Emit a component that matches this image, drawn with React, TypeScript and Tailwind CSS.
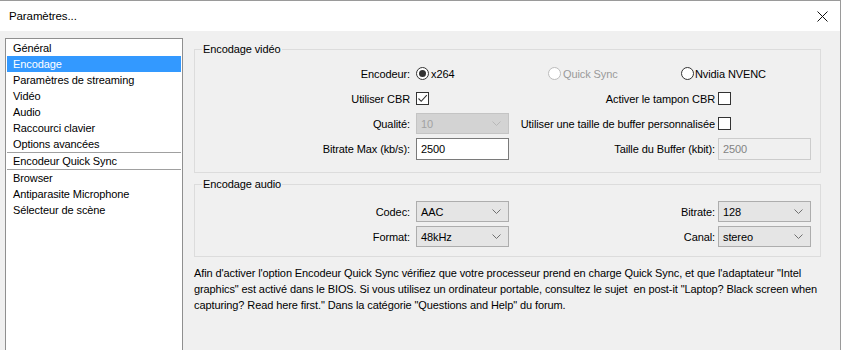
import React from "react";

const font = { fontFamily: '"Liberation Sans", Arial, sans-serif' };

const Chevron = ({ disabled }: { disabled?: boolean }) => (
  <svg width="9" height="5" viewBox="0 0 9 5" className="shrink-0">
    <path d="M0.5 0.5 L4.5 4.5 L8.5 0.5" fill="none" stroke={disabled ? "#b8b8b8" : "#707070"} strokeWidth="1" />
  </svg>
);

const Combo = ({ value, disabled }: { value: string; disabled?: boolean }) => (
  <div
    className={
      "flex h-[21px] w-[93px] items-center justify-between border pl-[4px] pr-[7px] " +
      (disabled ? "border-[#c4c4c4] bg-[#d3d3d3] text-[#a2a2a2]" : "border-[#adadad] bg-[#e5e5e5] text-black")
    }
  >
    <span>{value}</span>
    <Chevron disabled={disabled} />
  </div>
);

const TextBox = ({ value, disabled }: { value: string; disabled?: boolean }) => (
  <div
    className={
      "flex h-[22px] w-[93px] items-center border pl-[4px] " +
      (disabled ? "border-[#cccccc] bg-[#f0f0f0] text-[#838383]" : "border-[#7a7a7a] bg-white text-black")
    }
  >
    {value}
  </div>
);

const Check = ({ checked }: { checked?: boolean }) => (
  <div className="flex h-[13px] w-[13px] items-center justify-center border border-[#333333] bg-white">
    {checked && (
      <svg width="11" height="11" viewBox="0 0 11 11">
        <path d="M1.5 5.5 L4.2 8.3 L9.8 2.2" fill="none" stroke="#333333" strokeWidth="1.1" />
      </svg>
    )}
  </div>
);

const Radio = ({ checked, disabled }: { checked?: boolean; disabled?: boolean }) => (
  <div
    className={
      "flex h-[13px] w-[13px] items-center justify-center rounded-full border bg-white " +
      (disabled ? "border-[#bcbcbc]" : "border-[#333333]")
    }
  >
    {checked && <div className="h-[7px] w-[7px] rounded-full bg-[#333333]" />}
  </div>
);

const Row = ({
  label,
  left,
  rightLabel,
  right,
}: {
  label: string;
  left: React.ReactNode;
  rightLabel?: string;
  right?: React.ReactNode;
}) => (
  <div className="grid h-[25px] grid-cols-[221px_93px_209px_93px] items-center whitespace-nowrap">
    <div className="pr-[6px] text-right">{label}</div>
    <div>{left}</div>
    <div className="pr-[3px] text-right">{rightLabel}</div>
    <div>{right}</div>
  </div>
);

const menu = [
  "Général",
  "Encodage",
  "Paramètres de streaming",
  "Vidéo",
  "Audio",
  "Raccourci clavier",
  "Options avancées",
  "-",
  "Encodeur Quick Sync",
  "-",
  "Browser",
  "Antiparasite Microphone",
  "Sélecteur de scène",
];

export default function App() {
  return (
    <div style={font} className="h-[350px] w-[841px] overflow-hidden border-r border-t border-[#9a9a9a] bg-[#f0f0f0] text-[11px] leading-[16px] tracking-[-0.1px] text-black">
      <div className="flex h-[30px] items-center justify-between bg-white pl-[9px] pr-[12px] text-[11.5px]">
        <span>Paramètres...</span>
        <svg width="11" height="11" viewBox="0 0 11 11">
          <path d="M0.5 0.5 L10.5 10.5 M10.5 0.5 L0.5 10.5" stroke="#111111" strokeWidth="1" />
        </svg>
      </div>

      <div className="flex">
        <div className="ml-[5px] mt-[7px] h-[330px] w-[178px] border border-[#8f8f8f] bg-white px-[1px] pt-[1px]">
          {menu.map((m, i) =>
            m === "-" ? (
              <div key={i} className="h-px bg-[#a0a0a0]" />
            ) : (
              <div
                key={i}
                className={"h-[16px] pl-[6px] " + (m === "Encodage" ? "bg-[#3399ff] text-white" : "")}
              >
                {m}
              </div>
            )
          )}
        </div>

        <div className="ml-[11px] w-[627px] pt-[10px]">
          <fieldset className="border border-[#dcdcdc] pb-[11px]">
            <legend className="ml-[7px] px-[1px]">Encodage vidéo</legend>
            <div className="pt-[4px] whitespace-nowrap">
              <div className="flex h-[25px] items-center">
                <div className="w-[221px] pr-[6px] text-right">Encodeur:</div>
                <div className="flex w-[132px] items-center gap-[2px]">
                  <Radio checked />
                  <span>x264</span>
                </div>
                <div className="flex w-[133px] items-center gap-[2px] text-[#9a9a9a]">
                  <Radio disabled />
                  <span>Quick Sync</span>
                </div>
                <div className="flex items-center gap-[1px]">
                  <Radio />
                  <span>Nvidia NVENC</span>
                </div>
              </div>
              <Row label="Utiliser CBR" left={<Check checked />} rightLabel="Activer le tampon CBR" right={<Check />} />
              <Row
                label="Qualité:"
                left={<Combo value="10" disabled />}
                rightLabel="Utiliser une taille de buffer personnalisée"
                right={<Check />}
              />
              <Row
                label="Bitrate Max (kb/s):"
                left={<TextBox value="2500" />}
                rightLabel="Taille du Buffer (kbit):"
                right={<TextBox value="2500" disabled />}
              />
            </div>
          </fieldset>

          <fieldset className="mt-[3px] border border-[#dcdcdc] pb-[7px]">
            <legend className="ml-[7px] px-[1px]">Encodage audio</legend>
            <div className="pt-[7px]">
              <Row label="Codec:" left={<Combo value="AAC" />} rightLabel="Bitrate:" right={<Combo value="128" />} />
              <Row label="Format:" left={<Combo value="48kHz" />} rightLabel="Canal:" right={<Combo value="stereo" />} />
            </div>
          </fieldset>

          <p className="mt-[8px] whitespace-nowrap">
            Afin d'activer l'option Encodeur Quick Sync vérifiez que votre processeur prend en charge Quick Sync, et que l'adaptateur "Intel
            <br />
            graphics" est activé dans le BIOS. Si vous utilisez un ordinateur portable, consultez le sujet&nbsp; en post-it "Laptop? Black screen when
            <br />
            capturing? Read here first." Dans la catégorie "Questions and Help" du forum.
          </p>
        </div>
      </div>
    </div>
  );
}
